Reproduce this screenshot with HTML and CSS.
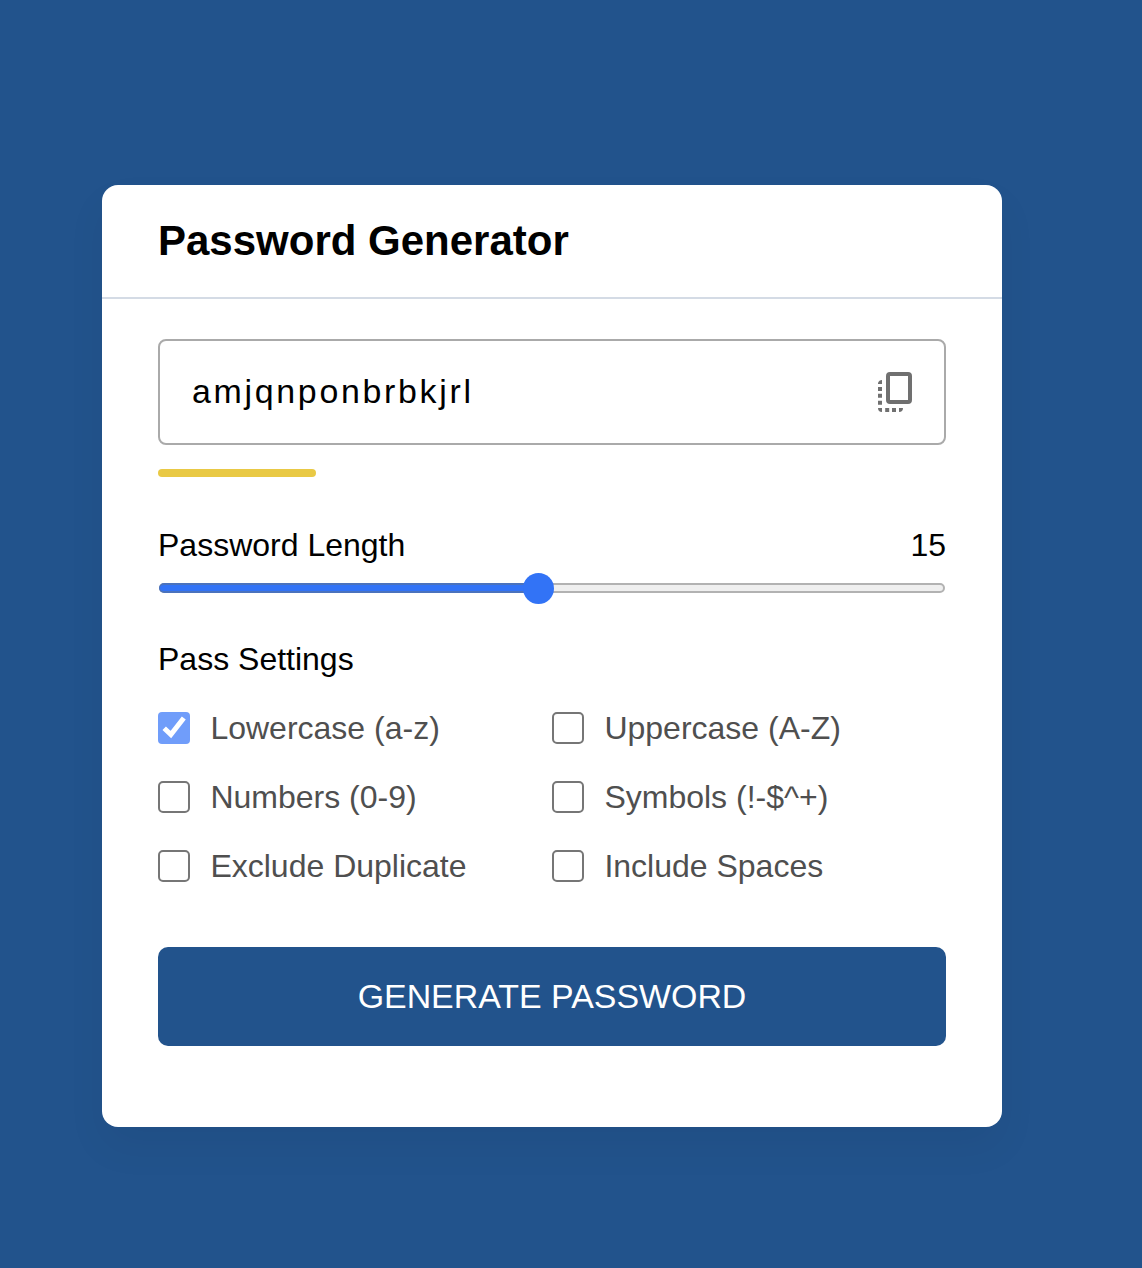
FILE: index.html
```html
<!DOCTYPE html>
<html lang="en">
<head>
<meta charset="utf-8">
<title>Password Generator</title>
<link rel="stylesheet" href="styles.css">
</head>
<body>
<main class="container">
  <h2 class="title">Password Generator</h2>
  <div class="wrapper">
    <div class="input-box">
      <span class="password">amjqnponbrbkjrl</span>
      <svg class="copy" viewBox="0 0 36 42" aria-hidden="true">
        <rect x="10" y="3" width="22" height="28" rx="2"/>
        <path d="M0 13V12Q1 9 4 9v4zM0 16h4v4H0zM0 22.8h4v4H0zM0 29.8h4v4H0zM0 37h4v4Q0 41 0 37zM7.2 37h4v4h-4zM14 37h4v4h-4zM21 37h4Q25 41 21 41z"/>
      </svg>
    </div>
    <div class="strength"></div>
    <section class="length">
      <div class="details"><span>Password Length</span><span>15</span></div>
      <div class="slider"><div class="fill"></div><div class="thumb"></div></div>
    </section>
    <section class="settings">
      <div class="settings-title">Pass Settings</div>
      <ul class="options">
        <li class="option checked"><span class="box"><svg viewBox="0 0 32 32" aria-hidden="true"><path d="M6.2 16.2L12.9 22.6L25.8 6"/></svg></span>Lowercase (a-z)</li>
        <li class="option"><span class="box"></span>Uppercase (A-Z)</li>
        <li class="option"><span class="box"></span>Numbers (0-9)</li>
        <li class="option"><span class="box"></span>Symbols (!-$^+)</li>
        <li class="option"><span class="box"></span>Exclude Duplicate</li>
        <li class="option"><span class="box"></span>Include Spaces</li>
      </ul>
    </section>
    <button class="generate">GENERATE PASSWORD</button>
  </div>
</main>
</body>
</html>
```
FILE: styles.css
```css
* { box-sizing: border-box; margin: 0; padding: 0; }
body {
  min-height: 1268px;
  padding: 185px 0 0 102px;
  background: #22538c;
  color: #000;
  font: 32px/37px "Liberation Sans", Arial, sans-serif;
}
.container {
  width: 900px;
  height: 942px;
  background: #fff;
  border-radius: 16px;
  box-shadow: 0 20px 40px rgba(0, 0, 0, .05);
}
.title {
  height: 114px;
  padding: 32px 56px 0;
  border-bottom: 2px solid #d4dbe5;
  font-size: 42px;
  line-height: 48px;
}
.wrapper { padding: 40px 56px; }
.input-box {
  display: flex;
  align-items: center;
  justify-content: space-between;
  height: 106px;
  padding: 0 30px 0 32px;
  border: 2px solid #aaa;
  border-radius: 8px;
}
.password { padding-bottom: 2px; font-size: 33.92px; letter-spacing: 2.7px; }
.copy { width: 36px; height: 42px; fill: #707070; }
.copy rect { fill: none; stroke: #707070; stroke-width: 4; }
.strength {
  width: 158px;
  height: 8px;
  margin-top: 24px;
  border-radius: 4px;
  background: #e9c945;
}
.length { margin-top: 50px; }
.details { display: flex; justify-content: space-between; }
.slider {
  display: flex;
  align-items: center;
  height: 10px;
  margin: 19px 1px 0;
  border: 2px solid #b2b2b2;
  border-radius: 5px;
  background: #efefef;
}
.fill {
  flex: none;
  width: 380px;
  height: 10px;
  margin-left: -2px;
  border: 2px solid #4a72bd;
  border-width: 2px 0 2px 1px;
  border-radius: 5px 0 0 5px;
  background: #3273f6;
}
.thumb {
  flex: none;
  width: 31px;
  height: 31px;
  margin-left: -16px;
  border-radius: 50%;
  background: #3273f6;
}
.settings { margin-top: 48px; }
.options {
  display: grid;
  grid-template-columns: 394px 394px;
  row-gap: 32px;
  margin-top: 32px;
  list-style: none;
}
.option { display: flex; align-items: center; gap: 20.4px; color: #4f4f4f; }
.box {
  width: 32px;
  height: 32px;
  margin-bottom: 1px;
  border: 2px solid #767676;
  border-radius: 5px;
}
.checked .box { display: flex; border: 0; border-radius: 4px; background: #709dfa; }
.box path { fill: none; stroke: #fff; stroke-width: 5; }
.generate {
  display: block;
  width: 100%;
  height: 99px;
  margin-top: 62px;
  padding-bottom: 1px;
  border: 0;
  border-radius: 10px;
  background: #22538c;
  color: #fff;
  font: 33.92px/39px "Liberation Sans", Arial, sans-serif;
}
```
